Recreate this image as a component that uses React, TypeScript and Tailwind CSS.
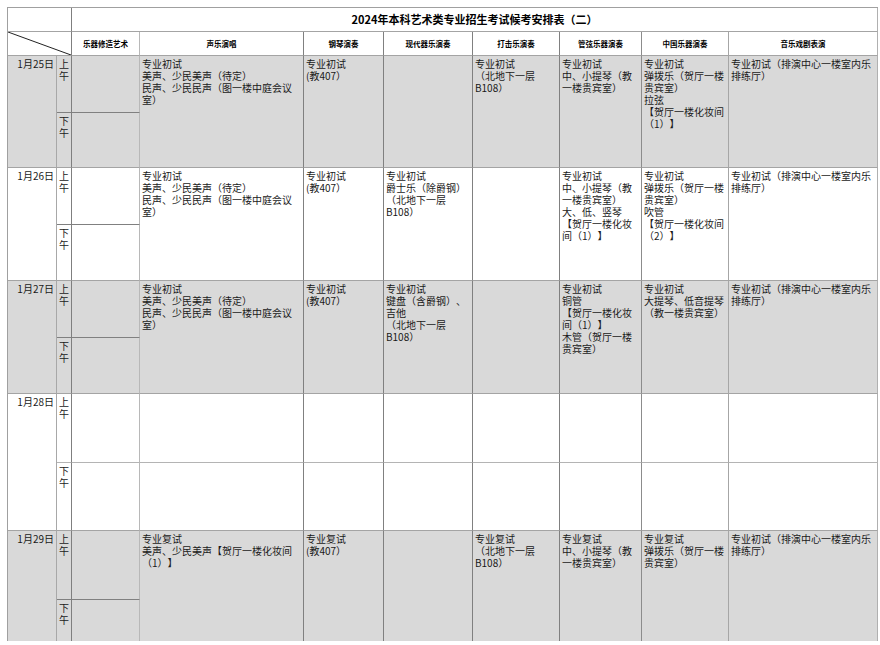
import React from 'react';

type Day = {
  date: string;
  gray: boolean;
  split: boolean;
  last?: boolean;
  cols: string[][];
};

const COL_R = [
  'border-r-[#a8a8a8]',
  'border-r-[#7f7f7f]',
  'border-r-[#b8b8b8]',
  'border-r-[#808080]',
  'border-r-[#808080]',
  'border-r-[#808080]',
  'border-r-[#808080]',
  'border-r-[#8c8c8c]',
  'border-r-[#a6a6a6]',
  'border-r-[#b0b0b0]',
];

const HEADERS = ['乐器修造艺术', '声乐演唱', '钢琴演奏', '现代器乐演奏', '打击乐演奏', '管弦乐器演奏', '中国乐器演奏', '音乐戏剧表演'];

const VOCAL = ['专业初试', '美声、少民美声（待定）', '民声、少民民声（图一楼中庭会议', '室）'];
const PIANO = ['专业初试', '(教407）'];
const PERC = ['专业初试', '（北地下一层', 'B108）'];
const STRINGS = ['专业初试', '中、小提琴（教', '一楼贵宾室）'];
const DRAMA = ['专业初试（排演中心一楼室内乐', '排练厅）'];

const DAYS: Day[] = [
  {
    date: '1月25日',
    gray: true,
    split: false,
    cols: [VOCAL, PIANO, [], PERC, STRINGS, ['专业初试', '弹拨乐（贺厅一楼', '贵宾室）', '拉弦', '【贺厅一楼化妆间', '（1）】'], DRAMA],
  },
  {
    date: '1月26日',
    gray: false,
    split: false,
    cols: [
      VOCAL,
      PIANO,
      ['专业初试', '爵士乐（除爵钢）', '（北地下一层', 'B108）'],
      [],
      ['专业初试', '中、小提琴（教', '一楼贵宾室）', '大、低、竖琴', '【贺厅一楼化妆', '间（1）】'],
      ['专业初试', '弹拨乐（贺厅一楼', '贵宾室）', '吹管', '【贺厅一楼化妆间', '（2）】'],
      DRAMA,
    ],
  },
  {
    date: '1月27日',
    gray: true,
    split: false,
    cols: [
      VOCAL,
      PIANO,
      ['专业初试', '键盘（含爵钢）、', '吉他', '（北地下一层', 'B108）'],
      [],
      ['专业初试', '铜管', '【贺厅一楼化妆', '间（1）】', '木管（贺厅一楼', '贵宾室）'],
      ['专业初试', '大提琴、低音提琴', '（教一楼贵宾室）'],
      DRAMA,
    ],
  },
  {
    date: '1月28日',
    gray: false,
    split: true,
    cols: [[], [], [], [], [], [], []],
  },
  {
    date: '1月29日',
    gray: true,
    split: false,
    last: true,
    cols: [
      ['专业复试', '美声、少民美声【贺厅一楼化妆间', '（1）】'],
      ['专业复试', '(教407）'],
      [],
      ['专业复试', '（北地下一层', 'B108）'],
      ['专业复试', '中、小提琴（教', '一楼贵宾室）'],
      ['专业复试', '弹拨乐（贺厅一楼', '贵宾室）'],
      DRAMA,
    ],
  },
];

function Lines({ lines }: { lines: string[] }) {
  return (
    <>
      {lines.map((l, i) => (
        <div key={i} className="whitespace-nowrap">
          {l}
        </div>
      ))}
    </>
  );
}

function DayBlock({ d }: { d: Day }) {
  const bg = d.gray ? 'bg-[#d9d9d9]' : 'bg-white';
  const rowB = d.last ? 'border-b-0' : 'border-b border-b-[#a4a4a4]';
  const midB = 'border-b border-b-[#808080]';
  const midLight = 'border-b border-b-[#b4b4b4]';
  const cell = `border-r overflow-hidden px-[2px] pt-[2px] text-[10px] leading-[12px] text-[#1a1a1a] [text-spacing-trim:space-all] ${bg}`;
  const ampm = (a: string, b: string, bb: string) => (
    <div className={`${cell} ${COL_R[1]} ${bb} flex flex-col items-center px-0`}>
      <div>{a}</div>
      <div>{b}</div>
    </div>
  );
  return (
    <>
      <div className={`${cell} ${COL_R[0]} ${rowB} row-span-2 text-right pr-[2px]`}>{d.date}</div>
      {ampm('上', '午', d.split ? midLight : midB)}
      <div className={`${cell} ${COL_R[2]} ${d.split ? midLight : midB}`} />
      {d.cols.map((c, i) => (
        <div
          key={i}
          className={`${cell} ${COL_R[i + 3]} ${d.split ? midLight : rowB} ${d.split ? '' : 'row-span-2'}`}
        >
          <Lines lines={c} />
        </div>
      ))}
      {ampm('下', '午', rowB)}
      <div className={`${cell} ${COL_R[2]} ${rowB}`} />
      {d.split &&
        d.cols.map((c, i) => (
          <div key={'p' + i} className={`${cell} ${COL_R[i + 3]} ${rowB}`}>
            <Lines lines={[]} />
          </div>
        ))}
    </>
  );
}

export default function App() {
  return (
    <div className="w-[880px] h-[645px] overflow-hidden bg-white font-['Noto_Sans_CJK_SC','Noto_Sans',sans-serif] text-black">
      <div className="ml-[7px] mt-[7px] w-[871px] grid grid-cols-[49px_15px_68px_164px_80px_89px_87px_82px_87px_149px] grid-rows-[24px_24px_57px_55px_57px_56px_57px_56px_69px_68px_69px_41px] border-l border-l-[#a0a0a0] border-t border-t-[#a0a0a0]">
        {/* title row */}
        <div className={`col-span-2 border-r ${COL_R[1]} border-b border-b-[#a4a4a4] bg-white`} />
        <div className="col-span-8 border-r border-r-[#b0b0b0] border-b border-b-[#a4a4a4] bg-white flex items-center justify-center text-[11px] font-bold leading-none [text-spacing-trim:space-all]">
          2024年本科艺术类专业招生考试候考安排表（二）
        </div>
        {/* header row */}
        <div className={`col-span-2 relative border-r ${COL_R[1]} border-b border-b-[#a4a4a4] bg-white`}>
          <svg className="absolute inset-0 w-full h-full" preserveAspectRatio="none">
            <line x1="0" y1="0" x2="100%" y2="100%" stroke="#222" strokeWidth="1" />
          </svg>
        </div>
        {HEADERS.map((h, i) => (
          <div
            key={h}
            className={`border-r ${COL_R[i + 2]} border-b border-b-[#a4a4a4] bg-white flex items-center justify-center text-[7.5px] font-bold leading-none whitespace-nowrap`}
          >
            {h}
          </div>
        ))}
        {DAYS.map((d) => (
          <DayBlock key={d.date} d={d} />
        ))}
      </div>
    </div>
  );
}
